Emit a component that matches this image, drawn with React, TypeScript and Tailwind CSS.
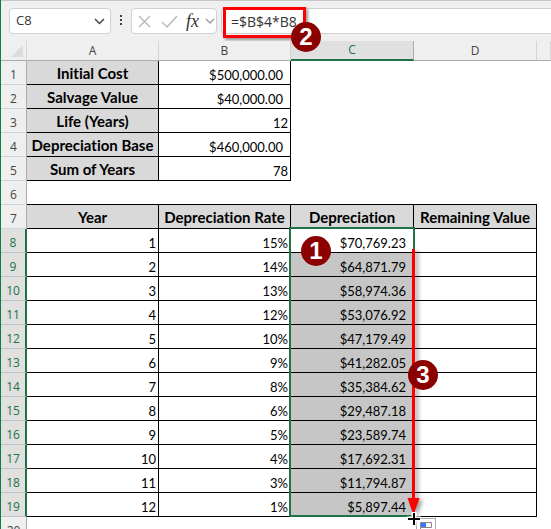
import { clsx } from 'clsx';

const summary = [
  { label: 'Initial Cost', value: '$500,000.00' },
  { label: 'Salvage Value', value: '$40,000.00' },
  { label: 'Life (Years)', value: '12' },
  { label: 'Depreciation Base', value: '$460,000.00' },
  { label: 'Sum of Years', value: '78' },
];

const schedule = [
  { rate: '15%', amount: '$70,769.23' },
  { rate: '14%', amount: '$64,871.79' },
  { rate: '13%', amount: '$58,974.36' },
  { rate: '12%', amount: '$53,076.92' },
  { rate: '10%', amount: '$47,179.49' },
  { rate: '9%', amount: '$41,282.05' },
  { rate: '8%', amount: '$35,384.62' },
  { rate: '6%', amount: '$29,487.18' },
  { rate: '5%', amount: '$23,589.74' },
  { rate: '4%', amount: '$17,692.31' },
  { rate: '3%', amount: '$11,794.87' },
  { rate: '1%', amount: '$5,897.44' },
];

const heading =
  'border-r border-b border-black bg-[#d9d9d9] p-0 pb-[3px] text-center align-bottom text-[15px] leading-4 font-bold';
const cell = 'border-r border-b border-black p-0 pb-px text-right align-bottom text-[13px] leading-4';

function RowNumber({ n, selected = false }: { n: number; selected?: boolean }) {
  return (
    <th
      scope="row"
      className={clsx(
        'border-b p-0 pb-px text-center align-bottom font-["Open_Sans",sans-serif] text-xs leading-4 font-normal',
        selected
          ? 'border-r-2 border-r-[#217346] border-b-[#c4c4c4] bg-[#e0e0e0] text-[#217346]'
          : 'border-r border-r-[#ababab] border-b-[#d4d4d4] bg-[#efefef] text-[#444]',
      )}
    >
      {n}
    </th>
  );
}

function Badge({ n, className }: { n: number; className: string }) {
  return (
    <span
      className={clsx(
        'absolute z-20 flex size-[30px] items-center justify-center rounded-full bg-[#8b0000] font-["Liberation_Sans",sans-serif] text-2xl leading-none font-bold text-white',
        className,
      )}
    >
      {n}
    </span>
  );
}

function FormulaBar() {
  return (
    <div className="flex h-[41px] shrink-0 border-t border-[#c6c6c6] bg-[#efefef] pt-[7px] pl-2 font-['Open_Sans',sans-serif] text-[13px] text-[#333]">
      <div className="flex h-[26px] w-[102px] items-center rounded border border-[#d1d1d1] bg-white">
        <input aria-label="Name box" defaultValue="C8" className="w-full min-w-0 bg-transparent pl-1.5 outline-none" />
        <button aria-label="Open name list" className="px-[5px]">
          <svg width="11" height="7" viewBox="0 0 11 7" fill="none" stroke="#444" strokeWidth="1.5">
            <path d="M1 1l4.500 4.500L10 1" />
          </svg>
        </button>
      </div>
      <svg className="mt-[7px] mr-2 ml-[9px]" width="3" height="12" fill="#444">
        <rect width="2" height="2" y="0" />
        <rect width="2" height="2" y="4" />
        <rect width="2" height="2" y="8" />
      </svg>
      <div className="flex h-[26px] w-[86px] items-center rounded border border-[#d1d1d1] bg-white pl-1.5">
        <button aria-label="Cancel">
          <svg width="13" height="13" viewBox="0 0 13 13" fill="none" stroke="#b5b5b5" strokeWidth="1.3">
            <path d="M1 1l11 11M12 1L1 12" />
          </svg>
        </button>
        <button aria-label="Enter" className="ml-2.5">
          <svg width="17" height="13" viewBox="0 0 17 13" fill="none" stroke="#b5b5b5" strokeWidth="1.3">
            <path d="M1 7l5 5L16 1" />
          </svg>
        </button>
        <button
          aria-label="Insert function"
          className="ml-2 font-['Liberation_Serif',serif] text-lg leading-5 text-[#333] italic"
        >
          fx
        </button>
        <button aria-label="More functions" className="ml-1.5">
          <svg width="10" height="6" viewBox="0 0 10 6" fill="none" stroke="#999" strokeWidth="1.3">
            <path d="M1 1l4 4L9 1" />
          </svg>
        </button>
      </div>
      <div className="relative ml-1 h-[26px] min-w-0 flex-1 rounded-l border border-r-0 border-[#d1d1d1] bg-white">
        <input
          aria-label="Formula bar"
          defaultValue="=$B$4*B8"
          className="block h-6 w-full bg-transparent pl-[9px] text-sm outline-none"
        />
        <div className="pointer-events-none absolute -top-0.5 left-px h-[31px] w-[83px] border-3 border-[#f00] shadow-[2px_2px_3px_rgba(0,0,0,0.4)]" />
        <Badge n={2} className="top-[13px] left-[69px]" />
      </div>
    </div>
  );
}

export default function App() {
  return (
    <div className="flex h-screen flex-col overflow-hidden border-l border-[#107c41] bg-white font-[Lato,sans-serif] text-black [font-variant-ligatures:none]">
      <FormulaBar />
      <main className="relative">
        <table className="w-full table-fixed border-separate border-spacing-0">
          <colgroup>
            <col className="w-[26px]" />
            <col className="w-[132px]" />
            <col className="w-[132px]" />
            <col className="w-[123px]" />
            <col className="w-[123px]" />
            <col />
          </colgroup>
          <thead>
            <tr className="h-5 bg-[#efefef] font-['Open_Sans',sans-serif] text-xs leading-4 text-[#444]">
              <td className="border-r border-b border-r-[#d4d4d4] border-b-[#ababab] p-0">
                <svg className="mr-[3px] ml-auto" width="12" height="12">
                  <path d="M12 0v12H0z" fill="#dcdcdc" />
                </svg>
              </td>
              {['A', 'B', 'C', 'D', ''].map(c => (
                <th
                  key={c}
                  className={clsx(
                    'p-0 font-normal',
                    c === 'C'
                      ? 'border-r border-b-2 border-r-[#ababab] border-b-[#217346] bg-[#e0e0e0] text-[#217346]'
                      : 'border-r border-b border-r-[#d4d4d4] border-b-[#ababab]',
                  )}
                >
                  {c}
                </th>
              ))}
            </tr>
          </thead>
          <tbody>
            {summary.map((row, i) => (
              <tr key={row.label} className="h-6">
                <RowNumber n={i + 1} />
                <th className={heading}>{row.label}</th>
                <td className={clsx(cell, row.value.startsWith('$') ? 'pr-[7px]' : 'pr-0.5')}>{row.value}</td>
                <td colSpan={3} />
              </tr>
            ))}
            <tr className="h-6">
              <RowNumber n={6} />
              <td colSpan={4} className="border-b border-black" />
              <td />
            </tr>
            <tr className="h-6">
              <RowNumber n={7} />
              <th className={heading}>Year</th>
              <th className={heading}>Depreciation Rate</th>
              <th className={heading}>Depreciation</th>
              <th className={heading}>Remaining Value</th>
              <td />
            </tr>
            {schedule.map((row, i) => (
              <tr key={row.amount} className="h-6">
                <RowNumber n={i + 8} selected />
                <td className={clsx(cell, 'pr-0.5')}>{i + 1}</td>
                <td className={clsx(cell, 'pr-0.5')}>{row.rate}</td>
                <td className={clsx(cell, 'pr-[7px]', i > 0 && 'bg-[#c6c6c6]')}>{row.amount}</td>
                <td className={cell} />
                <td />
              </tr>
            ))}
            <tr className="h-6">
              <RowNumber n={20} />
              <td colSpan={5} />
            </tr>
          </tbody>
        </table>

        {/* selected range C8:C19 */}
        <div className="pointer-events-none absolute top-[186px] left-[288px] h-[290px] w-[126px] border-2 border-[#217346]" />
        <Badge n={1} className="top-[195px] left-[300px]" />
        <svg
          className="absolute top-[208px] left-[406px] drop-shadow-[3px_2px_2px_rgba(0,0,0,0.4)]"
          width="13"
          height="266"
          fill="#f00"
        >
          <path d="M5 0h3v249h4.500L6.500 266 0.500 249H5z" />
        </svg>
        <Badge n={3} className="top-[319px] left-[407px]" />
        <button aria-label="Auto fill options" className="absolute top-[477px] left-[415px] size-5 border border-[#ababab] bg-white">
          <svg width="18" height="18">
            <path d="M3.500 3.500h11v5h-11zM3.500 8.500v5h6" fill="none" stroke="#888" />
            <path d="M4 4h5v4H4z" fill="#3b78ff" />
          </svg>
        </button>
        <svg className="absolute top-[471px] left-[406px] z-20" width="14" height="14">
          <path d="M7 0v14M0 7h14" stroke="#fff" strokeWidth="5" />
          <path d="M7 1v12M1 7h12" stroke="#000" strokeWidth="2" />
        </svg>
      </main>
    </div>
  );
}
